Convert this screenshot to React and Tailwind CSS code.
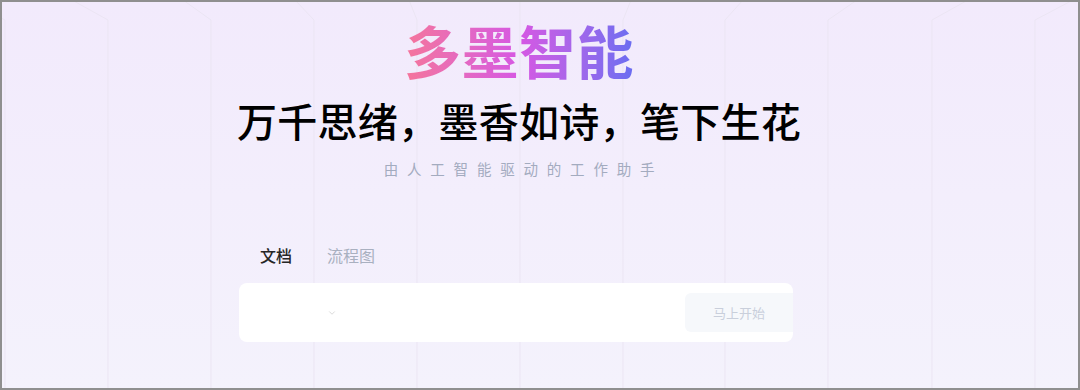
import { ChevronDown } from "lucide-react";

const CX = 518;
const LINES = [
  { x: 3, off: 38 },
  { x: 106, off: 36 },
  { x: 209, off: 28 },
  { x: 312, off: 19 },
  { x: 415, off: 8 },
  { x: 518, off: 0 },
  { x: 621, off: 8 },
  { x: 723, off: 18 },
  { x: 826, off: 29 },
  { x: 930, off: 36 },
  { x: 1033, off: 38 },
];

function GridBackdrop() {
  return (
    <svg className="absolute inset-0 pointer-events-none" width="1076" height="386" viewBox="0 0 1076 386">
      {LINES.map((l) => {
        const dir = l.x < CX ? -1 : 1;
        return (
          <polyline
            key={l.x}
            points={`${l.x + dir * l.off},-2 ${l.x},18 ${l.x},386`}
            fill="none"
            stroke="#ebe5f3"
            strokeWidth="1"
          />
        );
      })}
    </svg>
  );
}

export default function App() {
  return (
    <div
      className="relative w-[1080px] h-[390px] overflow-hidden border-2 border-[#8f8f8f] bg-linear-to-b from-[#f2eafc] to-[#f4f2fc]"
      style={{ fontFamily: '"Noto Sans CJK SC", "Noto Sans", sans-serif' }}
    >
      <GridBackdrop />

      <div className="relative flex flex-col items-center pt-[14px] pr-[42px]">
        <h1 className="text-[57px] leading-[66px] font-bold tracking-[0.5px] bg-linear-to-r from-[#f5759a] via-[#d657e3] to-[#696df1] bg-clip-text text-transparent">
          多墨智能
        </h1>
        <h2 className="mt-[14px] text-[40px] leading-[48px] font-medium tracking-[0.3px] text-black">
          万千思绪，墨香如诗，笔下生花
        </h2>
        <p className="mt-[15px] pl-[9px] text-[14.5px] leading-[20px] tracking-[8.8px] text-[#a3abbf]">
          由人工智能驱动的工作助手
        </p>

        {/* Tabs + input card */}
        <div className="mt-[64px] w-[554px] ml-[-6px]">
          <div className="flex items-center gap-[35px] pl-[21px] text-[16px] leading-[24px]">
            <span className="font-medium text-[#262626]">文档</span>
            <span className="text-[#a9b0c0]">流程图</span>
          </div>
          <div className="mt-[16px] h-[59px] bg-white rounded-[8px] flex items-center">
            <div className="w-[98px] flex justify-end">
              <ChevronDown size={10} className="text-[#c4c4c4]" strokeWidth={1.5} />
            </div>
            <div className="flex-1" />
            <button className="h-[39px] w-[108px] rounded-l-[6px] bg-[#f6f8fb] text-[13px] text-[#c9cfdb]">
              马上开始
            </button>
          </div>
        </div>
      </div>
    </div>
  );
}
